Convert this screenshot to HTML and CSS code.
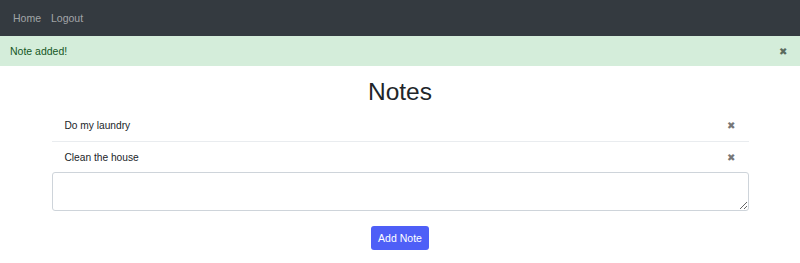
FILE: index.html
```html
<!DOCTYPE html>
<html>
<head>
<meta charset="utf-8">
<link rel="stylesheet" href="styles.css">
</head>
<body>
<nav class="navbar">
  <a class="nav-link" href="#">Home</a>
  <a class="nav-link" href="#">Logout</a>
</nav>
<div class="alert">
  <span>Note added!</span>
  <span class="alert-close">&#x2716;</span>
</div>
<main class="container">
  <h1 class="title">Notes</h1>
  <ul class="notes">
    <li class="note"><span>Do my laundry</span><span class="note-close">&#x2716;</span></li>
    <li class="note"><span>Clean the house</span><span class="note-close">&#x2716;</span></li>
  </ul>
  <textarea class="note-input"></textarea>
  <div class="actions">
    <button class="btn">Add Note</button>
  </div>
</main>
</body>
</html>
```
FILE: styles.css
```css
* { box-sizing: border-box; }
body {
  margin: 0;
  font-family: "Liberation Sans", Arial, sans-serif;
  font-size: 10px;
  color: #212529;
  background: #fff;
}
.navbar {
  height: 36px;
  background: #343a40;
  display: flex;
  align-items: center;
  padding: 0 13px;
  gap: 10px;
}
.nav-link {
  color: rgba(255,255,255,0.55);
  text-decoration: none;
  font-size: 10.5px;
}
.alert {
  height: 30px;
  background: #d4edda;
  color: #155724;
  display: flex;
  align-items: center;
  justify-content: space-between;
  padding: 0 13px 0 10px;
  font-size: 10.5px;
}
.alert-close {
  color: #5a6b5e;
  font-size: 10px;
}
.container {
  width: 697px;
  margin: 0 auto;
}
.title {
  margin: 11px 0 4px;
  text-align: center;
  font-weight: 400;
  font-size: 24.5px;
  line-height: 29px;
  color: #212529;
}
.notes {
  list-style: none;
  margin: 0;
  padding: 0;
}
.note {
  height: 31px;
  display: flex;
  align-items: center;
  justify-content: space-between;
  padding: 0 14px 0 13px;
  font-size: 10.2px;
}
.note + .note { border-top: 1px solid #e9ecef; }
.note-close {
  color: #777;
  font-size: 10px;
}
.note-input {
  display: block;
  width: 100%;
  height: 39px;
  margin-top: 0;
  border: 1px solid #ced4da;
  border-radius: 3px;
  resize: vertical;
}
.actions {
  display: flex;
  justify-content: center;
  margin-top: 15px;
}
.btn {
  background: #4e5ff7;
  color: #fff;
  border: none;
  border-radius: 3px;
  height: 24px;
  padding: 0 7px;
  font-family: "Liberation Sans", Arial, sans-serif;
  font-size: 10.5px;
}
```
